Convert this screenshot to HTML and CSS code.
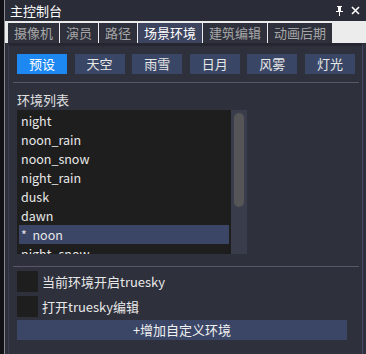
FILE: index.html
```html
<!DOCTYPE html>
<html>
<head>
<meta charset="utf-8">
<link rel="stylesheet" href="styles.css">
</head>
<body>
<div class="frame">
  <div class="edge"></div>
  <div class="edge-line"></div>
  <div class="window">
    <div class="titlebar">
      <span class="title">主控制台</span>
      <div class="title-icons">
        <svg width="9" height="10" viewBox="0 0 9 10"><path d="M2 0h5v1H6v4h2v1H5v4H4V6H1V5h2V1H2z" fill="#fff"/></svg>
        <svg width="9" height="9" viewBox="0 0 9 9"><path d="M1 1L8 8M8 1L1 8" stroke="#fff" stroke-width="1.6"/></svg>
      </div>
    </div>
    <div class="tabs">
      <div class="tab">摄像机</div>
      <div class="tab">演员</div>
      <div class="tab">路径</div>
      <div class="tab active">场景环境</div>
      <div class="tab">建筑编辑</div>
      <div class="tab">动画后期</div>
    </div>
    <div class="panel">
      <div class="btn-row">
        <div class="pbtn on">预设</div>
        <div class="pbtn">天空</div>
        <div class="pbtn">雨雪</div>
        <div class="pbtn">日月</div>
        <div class="pbtn">风雾</div>
        <div class="pbtn">灯光</div>
      </div>
      <div class="sep"></div>
      <div class="label">环境列表</div>
      <div class="listbox">
        <div class="list">
          <div class="row">night</div>
          <div class="row">noon_rain</div>
          <div class="row">noon_snow</div>
          <div class="row">night_rain</div>
          <div class="row">dusk</div>
          <div class="row">dawn</div>
          <div class="row sel">*&nbsp; noon</div>
          <div class="row">night_snow</div>
        </div>
        <div class="scroll"><div class="thumb"></div></div>
      </div>
      <div class="sep sep2"></div>
      <div class="check"><div class="box"></div><span>当前环境开启truesky</span></div>
      <div class="check"><div class="box"></div><span>打开truesky编辑</span></div>
      <div class="addbtn">+增加自定义环境</div>
    </div>
  </div>
</div>
</body>
</html>
```
FILE: styles.css
```css
* { box-sizing: border-box; }
html, body { margin: 0; padding: 0; }
body {
  width: 366px;
  height: 354px;
  overflow: hidden;
  background: #2e303c;
  font-family: "Noto Sans CJK SC", "Noto Sans", sans-serif;
  font-size: 13px;
  color: #e6e6e6;
}
.frame { display: flex; height: 354px; }
.edge { width: 4px; background: #121216; }
.edge-line { width: 1px; background: #8a8a90; }
.window { flex: 1; display: flex; flex-direction: column; background: #2e303c; }
.titlebar {
  height: 21px;
  background: #2a2c37;
  display: flex;
  align-items: center;
  justify-content: space-between;
  padding: 0 6px 0 5px;
}
.title { color: #fff; font-size: 13px; line-height: 21px; }
.title-icons { display: flex; gap: 7px; align-items: center; }
.tabs {
  height: 22px;
  background: #ececec;
  display: flex;
  gap: 1px;
  padding: 2px 0 0 3px;
}
.tab {
  height: 20px;
  background: #2e303c;
  color: #a6a6a6;
  padding: 0 6px;
  line-height: 20px;
  font-size: 13px;
}
.tab.active { background: #3d4460; color: #fff; }
.panel {
  flex: 1;
  margin-left: 3px;
  margin-right: 3px;
  border-left: 1px solid #3a3d52;
  border-right: 1px solid #464b6a;
  border-top: 3px solid #25262f;
  padding: 8px 0 0 8px;
}
.btn-row { display: flex; gap: 7.6px; }
.pbtn {
  width: 50px;
  height: 20px;
  background: #3a4666;
  color: #e8e8e8;
  text-align: center;
  line-height: 20px;
  font-size: 13px;
}
.pbtn.on { background: #1e88f2; color: #fff; }
.sep { height: 1px; background: #56586a; margin: 8px 0 0 -4px; width: 346px; }
.label { margin-top: 8px; height: 18px; line-height: 18px; color: #e0e0e0; }
.listbox { display: flex; margin-top: 1px; height: 144px; width: 230px; }
.list {
  width: 214px;
  background: #1e1e1e;
  padding: 1px 2px;
  overflow: hidden;
}
.row {
  height: 19px;
  line-height: 19px;
  padding-left: 2px;
  color: #e8e8e8;
  font-size: 12.5px;
}
.row.sel { background: #3b4566; }
.scroll { width: 16px; background: #393c4a; padding: 3px 3px 0 3px; }
.thumb { height: 94px; background: #555558; border-radius: 5px; }
.sep2 { margin-top: 12px; }
.check { display: flex; align-items: center; gap: 4px; margin-top: 3px; height: 22px; }
.check + .check { margin-top: 3px; }
.box { width: 21px; height: 21px; background: #1e1e1e; }
.check span { color: #e8e8e8; font-size: 13px; }
.addbtn {
  margin-top: 3px;
  width: 330px;
  height: 20px;
  background: #3b4666;
  text-align: center;
  line-height: 20px;
  color: #f0f0f0;
}
```
